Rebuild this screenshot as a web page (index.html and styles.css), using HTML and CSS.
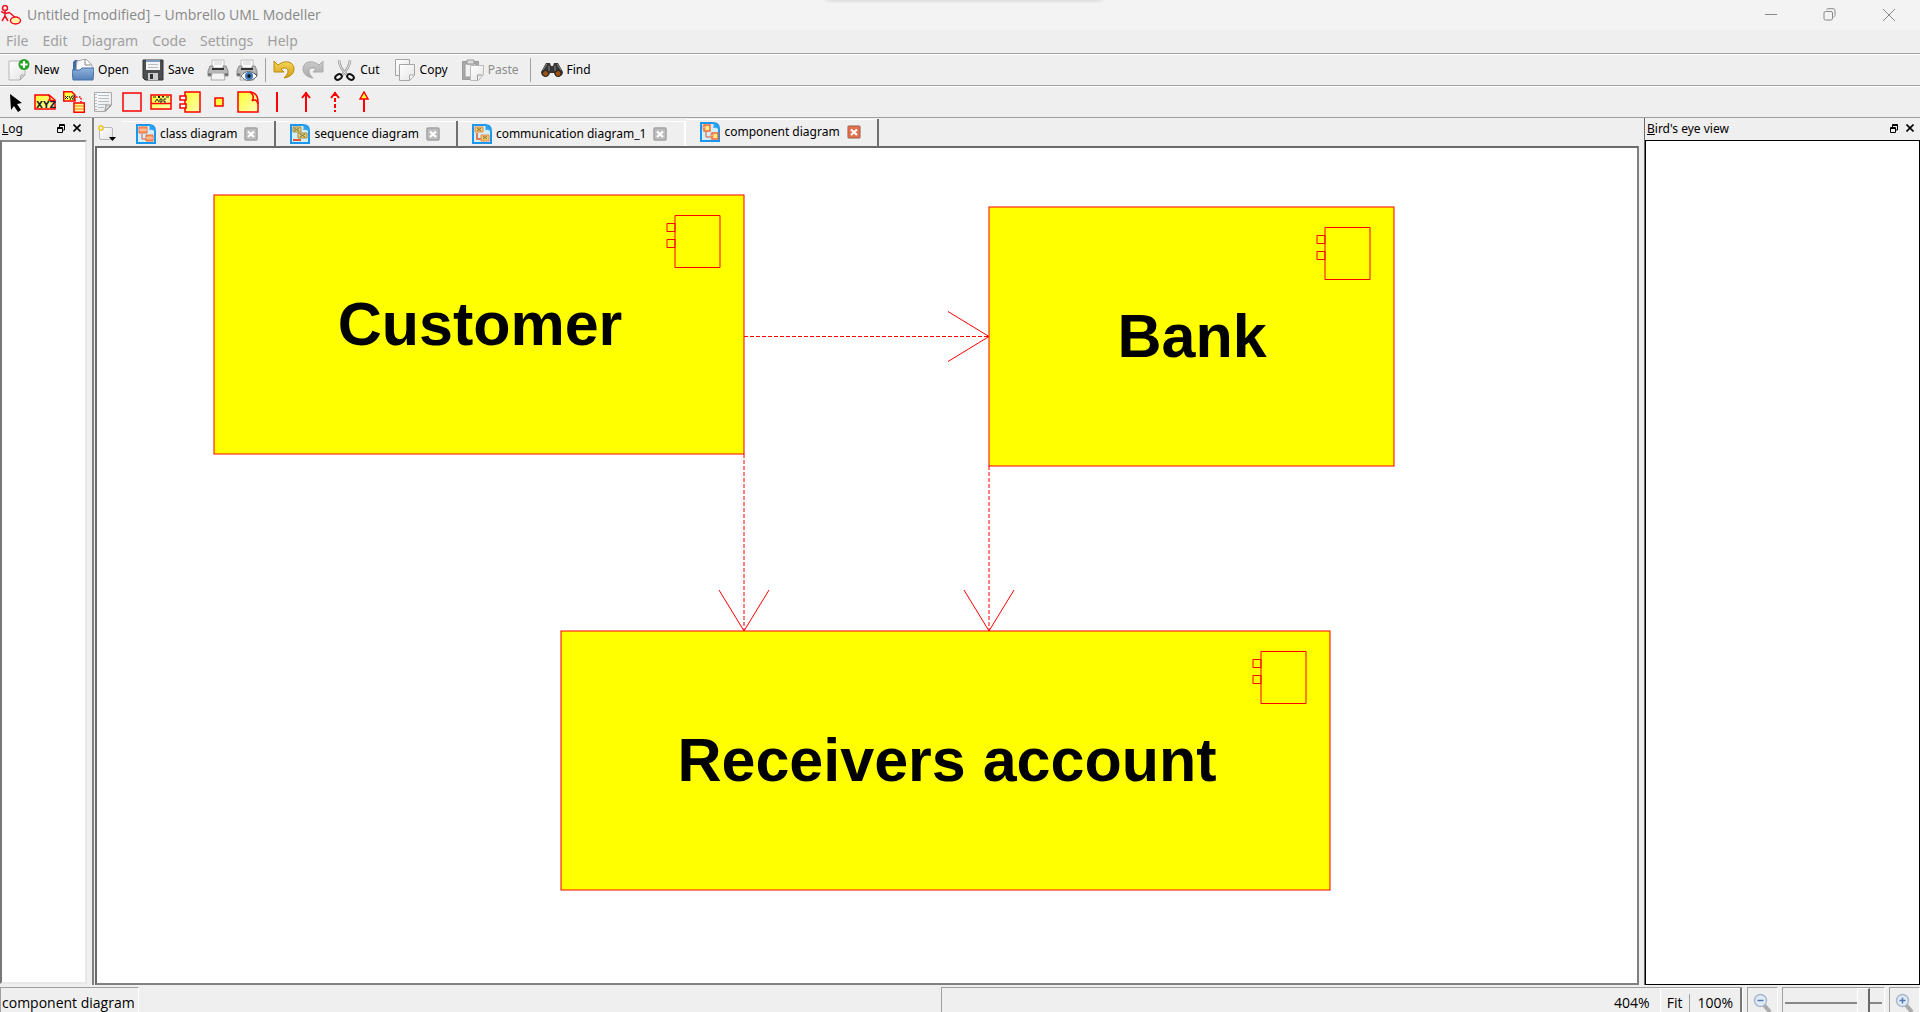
FILE: index.html
```html
<!DOCTYPE html>
<html lang="en">
<head>
<meta charset="utf-8">
<title>Untitled [modified] – Umbrello UML Modeller</title>
<link rel="stylesheet" href="styles.css">
</head>
<body>
<svg class="defs" aria-hidden="true">
  <defs>
    <linearGradient id="paper" x1="0" y1="0" x2="1" y2="1"><stop offset="0" stop-color="#fff"/><stop offset="1" stop-color="#e4e4e4"/></linearGradient>
    <linearGradient id="yellow" x1="0" y1="0" x2="1" y2="1"><stop offset="0" stop-color="#ffff30"/><stop offset="1" stop-color="#ffffb8"/></linearGradient>
    <linearGradient id="blue" x1="0" y1="0" x2="0" y2="1"><stop offset="0" stop-color="#8fb3dc"/><stop offset="1" stop-color="#5580b8"/></linearGradient>
    <linearGradient id="gold" x1="0" y1="0" x2="0" y2="1"><stop offset="0" stop-color="#f6d95a"/><stop offset="1" stop-color="#d59a12"/></linearGradient>
    <linearGradient id="silver" x1="0" y1="0" x2="0" y2="1"><stop offset="0" stop-color="#ccc"/><stop offset="1" stop-color="#aaa"/></linearGradient>
    <symbol id="sheet" viewBox="0 0 20 20">
      <path d="M1 1h12c4 0 6 2 6 6v12H1z" fill="#d3effc" stroke="#1c97ec" stroke-width="2"/>
      <path d="M12 1c2 1 2 3 1 5 3-1 5 0 6 3V5l-4-4z" fill="#2ea2f0"/>
    </symbol>
    <symbol id="float" viewBox="0 0 8 9"><path d="M2.500 3V.5h5V6H6M2.500 1.500h5M.5 3.500h5v5h-5zM.5 4.500h5" fill="none" stroke="#000"/></symbol>
    <symbol id="cross" viewBox="0 0 8 8"><path d="M.5.5l7 7M7.500.5l-7 7" fill="none" stroke="#000" stroke-width="1.600"/></symbol>
    <symbol id="tabclose" viewBox="0 0 14 14">
      <rect x=".75" y=".75" width="12.500" height="12.500" rx="1.500" fill="currentColor" stroke="#0003" stroke-width="1.500"/>
      <path d="M4 4.500l6 5.500M10 4.500l-6 5.500" stroke="#fff" stroke-width="2.200"/>
    </symbol>
    <symbol id="printer" viewBox="0 0 22 22">
      <path d="M5 1h12v8H5z" fill="#fff" stroke="#bbb"/><path d="M7 3h8M7 5h8" stroke="#ccc"/>
      <path d="M3 7h3v3h10V7h3l2 5v5H1v-5z" fill="#b8b8b8" stroke="#8c8c8c"/>
      <path d="M5 10h12" stroke="#333" stroke-width="2"/><path d="M1 15.500h20" stroke="#666" stroke-width="2"/>
      <path d="M5 14h12l1 7H4z" fill="#f4f4f4" stroke="#aaa"/>
    </symbol>
  </defs>
</svg>

<div class="app">
  <header class="titlebar">
    <svg class="logo" width="21" height="20" viewBox="0 0 21 20" fill="none" stroke="#f00f22" stroke-width="1.500"><circle cx="4" cy="3" r="2.500"/><path d="M4 5.500v6M0 6.500l4 2 5-1M4 11l-3 5M4 11l3 5M9 8l7 6"/><ellipse cx="14.500" cy="15.500" rx="5" ry="3.500" fill="#fff6a8"/></svg>
    <h1 class="caption">Untitled [modified] – Umbrello UML Modeller</h1>
    <div class="winbuttons">
      <button class="winbtn" aria-label="Minimize"><svg width="12" height="12"><path d="M0 5.500h12" stroke="#888"/></svg></button>
      <button class="winbtn" aria-label="Restore"><svg width="13" height="13" fill="none" stroke="#888"><rect x="1" y="3.500" width="8.500" height="8.500" rx="1.500"/><path d="M3.500 2C4 1 4.500.7 6 .7h4c1.500 0 2 .7 2 2v4c0 1.500-.5 2-1.500 2.500"/></svg></button>
      <button class="winbtn" aria-label="Close"><svg width="12" height="12"><path d="M0 0l12 12M12 0L0 12" stroke="#888"/></svg></button>
    </div>
    <div class="snapbar"></div>
  </header>

  <nav class="menubar">
    <button>File</button><button>Edit</button><button>Diagram</button><button>Code</button><button>Settings</button><button>Help</button>
  </nav>

  <div class="toolbar main-tools">
    <button class="tool"><svg width="22" height="22"><path d="M1 2h16v14l-5 5H1z" fill="url(#paper)" stroke="#b5b5b5"/><path d="M12 21l1-5h4z" fill="#ddd" stroke="#aaa"/><circle cx="16" cy="5.500" r="5.500" fill="#27a327"/><path d="M16 2v7M12.500 5.500h7" stroke="#fff" stroke-width="2.200"/></svg>New</button>
    <button class="tool"><svg width="22" height="22"><path d="M1 3l2-2h5v10H1z" fill="#3f6da5"/><path d="M5 2l9-2 6 6v6H4z" fill="#fafafa" stroke="#aaa"/><path d="M13 0v6h6" fill="none" stroke="#888"/><path d="M0 11h8l2-2h12l-1 12H1z" fill="url(#blue)" stroke="#4670a6"/></svg>Open</button>
    <button class="tool"><svg width="22" height="22"><path d="M1 1h20v20H3l-2-2z" fill="#4b4d50" stroke="#333"/><path d="M4 1h14v10H4z" fill="#f2f4f6"/><path d="M4 2h14" stroke="#7d9cc0" stroke-width="2"/><path d="M6 5.500h10M6 8.500h10" stroke="#bbb"/><path d="M6 14h10v7H6z" fill="#ccc"/><path d="M8 15h3v5H8z" fill="#333"/></svg>Save</button>
    <button class="tool" aria-label="Print"><svg width="22" height="22"><use href="#printer"/></svg></button>
    <button class="tool" aria-label="Print preview"><svg width="22" height="22"><use href="#printer"/><path d="M5 17c4-6 11-6 16 0-5 6-12 6-16 0z" fill="#fff" stroke="#666"/><circle cx="13" cy="17" r="4" fill="#3c78b8"/><circle cx="13" cy="17" r="1.700" fill="#111"/></svg></button>
    <span class="rule"></span>
    <button class="tool" aria-label="Undo"><svg width="22" height="20"><path d="M1 1v11h10L8 9c4-2 7-1 7 2 0 2-1 4-4 7 6-1 10-4 10-9C21 2 13-1 5 5z" fill="url(#gold)" stroke="#b98a12"/></svg></button>
    <button class="tool" aria-label="Redo"><svg width="22" height="20"><path d="M21 1v11H11l3-3c-4-2-7-1-7 2 0 2 1 4 4 7-6-1-10-4-10-9C1 2 9-1 17 5z" fill="url(#silver)" stroke="#aaa"/></svg></button>
    <button class="tool wide"><svg width="22" height="22" fill="none"><path d="M5 1c0 5 3 10 8 15M16 1c0 5-3 10-8 15" stroke="#999" stroke-width="2.500"/><path d="M5 1c0 5 3 10 8 15M16 1c0 5-3 10-8 15" stroke="#eee"/><ellipse cx="4.500" cy="18" rx="3.500" ry="2.500" transform="rotate(-30 4.500 18)" stroke="#111" stroke-width="2"/><ellipse cx="16.500" cy="18" rx="3.500" ry="2.500" transform="rotate(30 16.500 18)" stroke="#111" stroke-width="2"/></svg>Cut</button>
    <button class="tool wide"><svg width="22" height="22" fill="url(#paper)" stroke="#a5a5a5"><path d="M1.500.5h14v16h-14z"/><path d="M5.500 5.500h15v11l-5 5h-10z"/><path d="M15.500 21v-5h5"/></svg>Copy</button>
    <button class="tool wide" disabled><svg width="22" height="22" stroke="#999"><path d="M.5 2.500h16v18H.5z" fill="#aaa"/><path d="M3 5h11v13H3z" fill="#f1f1f1"/><path d="M5 1h7v4H5z" fill="#ddd"/><path d="M8.500 6.500h13v9l-5 6h-8z" fill="url(#paper)" stroke="#bbb"/><path d="M15.500 21v-5h5" fill="none"/></svg>Paste</button>
    <span class="rule"></span>
    <button class="tool wide"><svg width="22" height="16"><path d="M5 1h4l1 3h2l1-3h4l5 9c0 6-8 6-9 1H9c-1 5-9 5-9-1z" fill="#353535"/><path d="M6 2L2 8M16 2l4 6M8 4v5M14 4v5" stroke="#888"/><circle cx="4.500" cy="11.500" r="3" fill="#9b5313" stroke="#222"/><circle cx="17" cy="11.500" r="3" fill="#9b5313" stroke="#222"/></svg>Find</button>
  </div>

  <div class="toolbar shape-tools">
    <button aria-label="Select"><svg width="22" height="22"><path d="M5 3l12 9-5 1 4 6-3 2-4-6-3 4z" fill="#000"/></svg></button>
    <button aria-label="Class"><svg width="22" height="16"><path d="M1 1h14l6 5v9H1z" fill="url(#yellow)" stroke="red" stroke-width="1.500"/><path d="M14 1c3 2 2 4 1 5l6 1" fill="none" stroke="red" stroke-width="1.500"/><text x="2" y="14" class="glyph">XYZ</text></svg></button>
    <button aria-label="Association class"><svg width="22" height="22"><path d="M.75.75h8L12 4v6H.75zM11 12h10.300v9.250H11z" fill="url(#yellow)" stroke="red" stroke-width="1.500"/><path d="M11 15h10M11 18h10" stroke="#f70"/><path d="M13 6h5v6" fill="none" stroke="red" stroke-width="1.500" stroke-dasharray="1.500 1.500"/><path d="M2 5l3 3m0-3L2 8m4-3l1 2m2-2L7 9m2-4h3L9 8h3" stroke="#222" fill="none"/></svg></button>
    <button aria-label="Note"><svg width="20" height="22"><path d="M1.500 1.500h17v13l-6 6h-11z" fill="url(#paper)" stroke="#aaa"/><path d="M5 4.500h11M5 7.500h11M5 10.500h11M5 13.500h9M5 16.500h6" stroke="#b4bec6" stroke-width="1"/><path d="M3 3v16" stroke="#777" stroke-dasharray="1 2"/><path d="M12 20l1-6h5z" fill="#ddd" stroke="#999"/></svg></button>
    <button aria-label="Box"><svg width="20" height="20"><path d="M1 1h18v18H1z" fill="none" stroke="red" stroke-width="1.500"/></svg></button>
    <button aria-label="Artifact"><svg width="22" height="16"><path d="M1 1h20v14H1z" fill="url(#yellow)" stroke="red" stroke-width="1.500"/><path d="M1 9.500h20" stroke="red" stroke-width="1.500"/><path d="M3 3h3m10 0h3M8 2l2 2m0-2L8 4m4-2l1 1 1-1m-1 1v1M5 8l2-3 2 3m1-3v3h2V5h-2m6 0h-2v3h2" fill="none" stroke="#222"/></svg></button>
    <button aria-label="Component"><svg width="22" height="22" fill="url(#yellow)" stroke="red" stroke-width="1.500"><path d="M6 1h15v20H6z"/><path d="M1 5h6v4H1zM1 13h6v4H1z" fill="#fff"/></svg></button>
    <button aria-label="Port"><svg width="10" height="10"><path d="M1 1h8v8H1z" fill="#ffff40" stroke="red" stroke-width="1.500"/></svg></button>
    <button aria-label="Document"><svg width="22" height="22"><path d="M1 1h13c5 1 7 5 7 10v10H1z" fill="url(#yellow)" stroke="red" stroke-width="1.500"/><path d="M13 1c4 3 4 6 2 9 3-2 5-1 6 3" fill="none" stroke="red" stroke-width="1.500"/></svg></button>
    <button aria-label="Association"><svg width="10" height="22"><path d="M5 1v20" stroke="red" stroke-width="2"/></svg></button>
    <button aria-label="Directed association"><svg width="10" height="22" fill="none" stroke="red" stroke-width="2"><path d="M5 1v20M1 7l4-5 4 5"/></svg></button>
    <button aria-label="Dependency"><svg width="10" height="22" fill="none" stroke="red" stroke-width="2"><path d="M5 1v20" stroke-dasharray="4 2"/><path d="M1 7l4-5 4 5"/></svg></button>
    <button aria-label="Generalization"><svg width="10" height="22" stroke="red"><path d="M5 7v14" stroke-width="2"/><path d="M1 8l4-7 4 7z" fill="#ff4" stroke-width="1.500"/></svg></button>
  </div>

  <main class="workspace">
    <aside class="dock log-dock">
      <div class="dock-title"><h2><u>L</u>og</h2><button aria-label="Float log"><svg width="8" height="9"><use href="#float"/></svg></button><button aria-label="Close log"><svg width="8" height="8"><use href="#cross"/></svg></button></div>
      <div class="log-list"></div>
    </aside>

    <section class="center">
      <div class="tabs">
        <button class="newtab" aria-label="New diagram"><svg width="20" height="18"><rect x="2.500" y="3.500" width="13" height="12" rx="1.500" fill="url(#paper)" stroke="#b8b8b8"/><circle cx="4" cy="4" r="3" fill="#f0c93c"/><circle cx="4" cy="4" r="1.300" fill="#fff9c5"/><path d="M12 13h7l-3.500 4z"/></svg></button>
        <div class="tab"><svg width="20" height="20"><use href="#sheet"/><path d="M6 10v5h6" fill="none" stroke="#e5522c"/><path d="M3 3h8v6H3zM10 11h7v6h-7z" fill="#ff9c68" stroke="#e86a3a"/><path d="M3 6h8M10 14h7" stroke="#ffd2b8"/></svg><button class="name">class diagram</button><button class="x" aria-label="Close class diagram"><svg width="14" height="14"><use href="#tabclose"/></svg></button></div>
        <div class="tab"><svg width="20" height="20"><use href="#sheet"/><path d="M3 3h8v5H3zM8 9h9v5H8z" fill="#e8cf6d" stroke="#a68b3f"/><path d="M4 4l5 3M9 4L4 7M10 10l5 3m0-3l-5 3" stroke="#6f7354"/><path d="M3 16h8" stroke="#e5522c" stroke-width="2"/></svg><button class="name">sequence diagram</button><button class="x" aria-label="Close sequence diagram"><svg width="14" height="14"><use href="#tabclose"/></svg></button></div>
        <div class="tab"><svg width="20" height="20"><use href="#sheet"/><path d="M5 9v6h4" fill="none" stroke="#e5522c" stroke-width="1.500"/><path d="M3 3h8v5H3zM9 11h8v6H9z" fill="#f3c969" stroke="#e58a4c"/><path d="M5 4l4 3M9 4L5 7M11 12l4 3m0-3l-4 3" stroke="#7f7342"/></svg><button class="name">communication diagram_1</button><button class="x" aria-label="Close communication diagram_1"><svg width="14" height="14"><use href="#tabclose"/></svg></button></div>
        <div class="tab active"><svg width="20" height="20"><use href="#sheet"/><path d="M6 9v6h5" fill="none" stroke="#e5522c"/><path d="M4 3h6v6H4zM12 11h6v6h-6z" fill="#ffef88" stroke="#f26a3a" stroke-width="1.500"/><path d="M3 4h2v3H3zM11 12h2v3h-2z" fill="#fff" stroke="#f26a3a"/></svg><button class="name">component diagram</button><button class="x" aria-label="Close component diagram"><svg width="14" height="14"><use href="#tabclose"/></svg></button></div>
      </div>
      <div class="canvas">
        <svg class="diagram" width="100%" height="100%" role="img" aria-label="Component diagram">
          <g transform="translate(-97 -148)" fill="none" stroke="red">
            <g fill="#ff0"><rect x="214" y="195" width="530" height="259"/><rect x="989" y="207" width="405" height="259"/><rect x="561" y="631" width="769" height="259"/></g>
            <path id="badge" d="M675 215.500h45v52h-45zM667 223.500h8v8h-8zM667 239.500h8v8h-8z"/>
            <use href="#badge" x="650" y="12"/><use href="#badge" x="586" y="436"/>
            <path d="M744 336.500h245M744 454v177M989 466v165" stroke-dasharray="4 2"/>
            <path d="M948 311.500l41 25-41 25M719 590l25 41 25-41M964 590l25 41 25-41"/>
            <g class="label"><text x="480" y="345">Customer</text><text x="1192" y="357">Bank</text><text x="947" y="781">Receivers account</text></g>
          </g>
        </svg>
      </div>
    </section>

    <aside class="dock bird-dock">
      <div class="dock-title"><h2><u>B</u>ird's eye view</h2><button aria-label="Float bird's eye view"><svg width="8" height="9"><use href="#float"/></svg></button><button aria-label="Close bird's eye view"><svg width="8" height="8"><use href="#cross"/></svg></button></div>
      <div class="bird-view"></div>
    </aside>
  </main>

  <footer class="status">
    <span class="cell message">component diagram</span>
    <div class="cell zoom"><span class="percent">404%</span><div class="presets"><button>Fit</button><span class="split"></span><button>100%</button></div></div>
    <button class="cell lens" aria-label="Zoom out"><svg width="20" height="19"><path d="M11 12l6 7" stroke="#aaa" stroke-width="4"/><circle cx="7.500" cy="7.500" r="6" fill="#dfebf8" stroke="#a8b8ca" stroke-width="1.500"/><path d="M4.500 7.500h6" stroke="#5379ae" stroke-width="1.500"/></svg></button>
    <div class="cell slide"><input type="range" min="0" max="100" value="86" aria-label="Zoom"></div>
    <button class="cell lens" aria-label="Zoom in"><svg width="20" height="19"><path d="M11 12l6 7" stroke="#aaa" stroke-width="4"/><circle cx="7.500" cy="7.500" r="6" fill="#dfebf8" stroke="#a8b8ca" stroke-width="1.500"/><path d="M4.500 7.500h6M7.500 4.500v6" stroke="#5379ae" stroke-width="1.500"/></svg></button>
  </footer>
</div>
</body>
</html>
```
FILE: styles.css
```css
* { box-sizing: border-box; }
html, body { height: 100%; margin: 0; }
body { background: #efefef; color: #000; font: 12px/16px "Noto Sans", sans-serif; overflow: hidden; }
button { display: flex; align-items: center; padding: 0; border: 0; background: none; font: inherit; color: inherit; white-space: nowrap; }
svg { display: block; flex: none; }
h1, h2 { margin: 0; font: inherit; }
.defs { position: absolute; width: 0; height: 0; }
.app { display: flex; flex-direction: column; height: 100vh; }

.titlebar { position: relative; display: flex; align-items: center; height: 29px; flex: none; background: #f3f3f3; color: #888; }
.logo { margin: 0 5px 0 1px; }
.caption { flex: 1; font: 14px/20px "Open Sans", sans-serif; }
.winbuttons { display: flex; }
.winbtn { width: 58px; height: 28px; justify-content: center; }
.winbuttons .winbtn:last-child { width: 62px; }
.snapbar { position: absolute; top: -4px; left: 43%; width: 276px; height: 4px; border-radius: 4px; box-shadow: 0 0 4px #0003; }

.menubar { display: flex; gap: 14px; height: 24px; flex: none; padding: 0 6px 1px; color: #a0a0a0; font-size: 14px; line-height: 20px; }

.toolbar { display: flex; align-items: center; height: 32px; flex: none; border-top: 1px solid #a0a0a0; box-shadow: inset 0 1px #fff; }
.main-tools { padding-left: 8px; gap: 7px; }
.tool { gap: 4px; height: 28px; }
.tool:nth-child(-n+3) { margin-right: 6px; }
.wide { margin-left: 3px; margin-right: 4px; }
.tool:disabled { color: #8c8c8c; }
.rule { width: 1px; height: 24px; background: #a0a0a0; }
.shape-tools { padding-left: 1px; }
.shape-tools button { width: 29px; height: 28px; justify-content: center; }
.glyph { font: bold 9px "DejaVu Sans", sans-serif; fill: #222; }

.workspace { display: flex; flex: 1; min-height: 0; border-top: 1px solid #a0a0a0; }
.dock { display: flex; flex-direction: column; flex: none; }
.dock-title { display: flex; align-items: center; gap: 8px; height: 22px; padding: 0 6px 2px 2px; }
.dock-title h2 { flex: 1; padding-top: 2px; }
.log-dock { width: 87px; margin-right: 5px; }
.bird-dock { width: 276px; margin-left: 5px; border-left: 1px solid #696969; }
.log-list { flex: 1; margin-bottom: 1px; background: #fff; border: 2px solid; border-color: #888 #e8e8e8 #e8e8e8 #777; }
.bird-view { flex: 1; background: #fff; border: 1px solid #000; }

.center { display: flex; flex-direction: column; flex: 1; min-width: 0; border-left: 2px solid #808080; }
.tabs { display: flex; align-items: flex-end; height: 28px; flex: none; padding-left: 3px; }
.newtab { width: 25px; height: 26px; }
.tab { display: flex; align-items: center; height: 25px; padding: 0 16px 0 14px; border-right: 2px solid #707070; box-shadow: inset 0 1px #fff; }
.tab .name { margin: 0 7px 0 4px; }
.tab .x { color: #bdbdbd; }
.tab:nth-last-child(2) { border-right-color: #fff; padding-right: 17px; }
.tab.active { height: 27px; padding: 0 16px 1px 14px; }
.tab.active .x { color: #e2714c; }
.canvas { flex: 1; min-height: 0; margin-left: 1px; overflow: hidden; background: #fff; border: 2px solid; border-color: #696969 #808080 #808080 #696969; }
.label { font: bold 61px "Liberation Sans", sans-serif; fill: #000; stroke: none; text-anchor: middle; }

.status { display: flex; align-items: stretch; gap: 4px; height: 27px; flex: none; padding-top: 2px; font: 14px/18px "Open Sans", sans-serif; }
.cell { border: 1px solid; border-color: #a0a0a0 #fff #fff #a0a0a0; border-bottom: 0; }
.message { padding: 6px 0 0 1px; width: 139px; white-space: nowrap; }
.zoom { display: flex; justify-content: flex-end; gap: 10px; width: 802px; margin-left: auto; }
.percent { padding-top: 6px; }
.presets { display: flex; gap: 7px; padding: 6px 7px 0; border-right: 2px solid #777; box-shadow: inset 1px 1px #fff; }
.presets button { height: 18px; }
.split { width: 1px; height: 18px; background: #a0a0a0; }
.lens { width: 31px; justify-content: center; align-items: flex-end; }
.slide { width: 103px; padding: 0 2px; }
.slide input { display: block; appearance: none; width: 100%; height: 24px; margin: 0; background: linear-gradient(#888, #888) 0 14px / 100% 2px no-repeat; }
.slide input::-webkit-slider-thumb { appearance: none; width: 13px; height: 24px; background: #efefef; border: 1px solid #fff; border-right: 2px solid #696969; border-bottom: 0; }
```
